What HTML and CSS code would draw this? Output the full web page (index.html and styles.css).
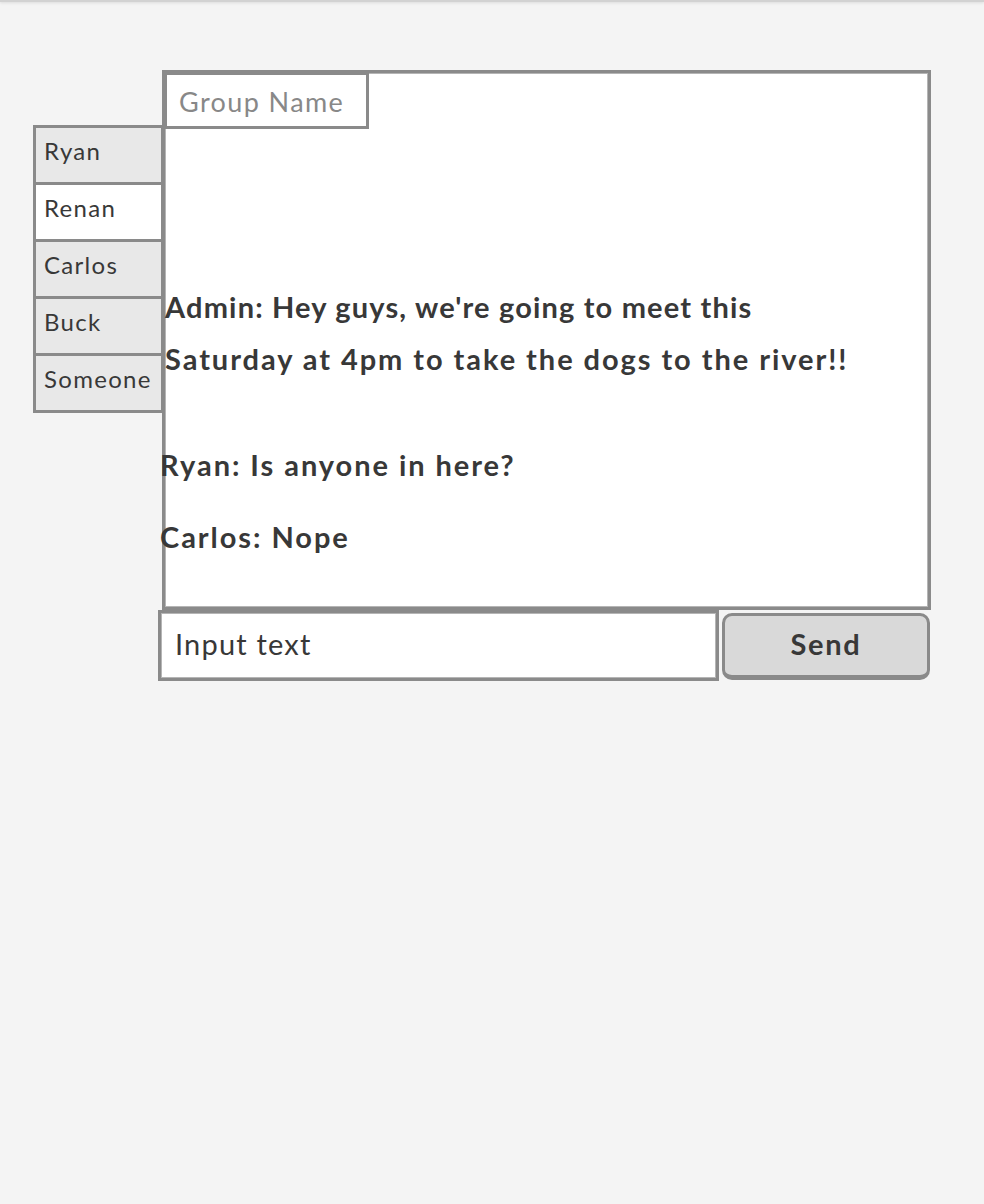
FILE: index.html
```html
<!DOCTYPE html>
<html>
<head>
<meta charset="utf-8">
<link rel="stylesheet" href="styles.css">
</head>
<body>
<div class="topbar"></div>
<div class="page">
  <ul class="members">
    <li class="member">Ryan</li>
    <li class="member active">Renan</li>
    <li class="member">Carlos</li>
    <li class="member">Buck</li>
    <li class="member">Someone</li>
  </ul>
  <div class="chat-col">
    <div class="chat-box">
      <div class="group-name">Group Name</div>
      <div class="messages">
        <p class="msg admin"><span class="line-one">Admin: Hey guys, we're going to meet this</span><br>Saturday at 4pm to take the dogs to the river!!</p>
        <p class="msg shifted first">Ryan: Is anyone in here?</p>
        <p class="msg shifted second">Carlos: Nope</p>
      </div>
    </div>
    <div class="input-row">
      <div class="input">Input text</div>
      <button class="send">Send</button>
    </div>
  </div>
</div>
</body>
</html>
```

FILE: styles.css
```css
html, body {
  margin: 0;
  padding: 0;
  background: #f4f4f4;
  font-family: Lato, "Open Sans", sans-serif;
  color: #383838;
}

.topbar {
  height: 2px;
  background: #d2d2d2;
  box-shadow: 0 1px 3px rgba(0,0,0,0.12);
}

.page {
  display: flex;
  align-items: flex-start;
  padding-left: 33px;
  padding-top: 68px;
}

.members {
  list-style: none;
  margin: 55px -2px 0 0;
  padding: 0;
  width: 131px;
  box-sizing: border-box;
  border: 3px solid #8a8a8a;
  border-top: none;
}

.member {
  height: 57px;
  box-sizing: border-box;
  border-top: 3px solid #8a8a8a;
  background: #e8e8e8;
  font-size: 24px;
  letter-spacing: 1.3px;
  line-height: 46px;
  padding-left: 8px;
  color: #383838;
}

.member.active {
  background: #fff;
}

.chat-col {
  width: 769px;
  display: flex;
  flex-direction: column;
}

.chat-box {
  height: 540px;
  box-sizing: border-box;
  border: 3px solid #8a8a8a;
  box-shadow: inset 0 0 0 1px #b5b5b5;
  background: #fff;
}

.group-name {
  width: 205px;
  height: 57px;
  margin: -1px 0 0 -1px;
  box-sizing: border-box;
  border: 3px solid #8a8a8a;
  background: #fff;
  color: #888;
  font-size: 27px;
  letter-spacing: 1.4px;
  line-height: 54px;
  padding-left: 12px;
}

.messages {
  padding-top: 152px;
}

.msg {
  margin: 0;
  font-weight: 700;
  font-size: 29px;
  letter-spacing: 1.95px;
  line-height: 52px;
  color: #383838;
}

.line-one {
  letter-spacing: 1.17px;
}

.admin {
  margin-left: 0;
}

.shifted {
  margin-left: -5px;
}

.first {
  margin-top: 54px;
}

.second {
  margin-top: 20px;
}

.input-row {
  display: flex;
  align-items: flex-start;
  margin-left: -4px;
}

.input {
  width: 561px;
  height: 71px;
  box-sizing: border-box;
  border: 3px solid #8a8a8a;
  box-shadow: inset 0 0 0 1px #b5b5b5;
  background: #fff;
  font-size: 29px;
  letter-spacing: 1.2px;
  line-height: 62px;
  padding-left: 14px;
  color: #383838;
}

.send {
  margin: 3px 0 0 3px;
  width: 208px;
  height: 67px;
  box-sizing: border-box;
  border: 3px solid #8a8a8a;
  border-bottom-width: 5px;
  border-radius: 10px;
  background: #d9d9d9;
  font-family: Lato, "Open Sans", sans-serif;
  font-weight: 700;
  font-size: 29px;
  letter-spacing: 1.75px;
  color: #383838;
  padding: 0 0 4px;
}
```
